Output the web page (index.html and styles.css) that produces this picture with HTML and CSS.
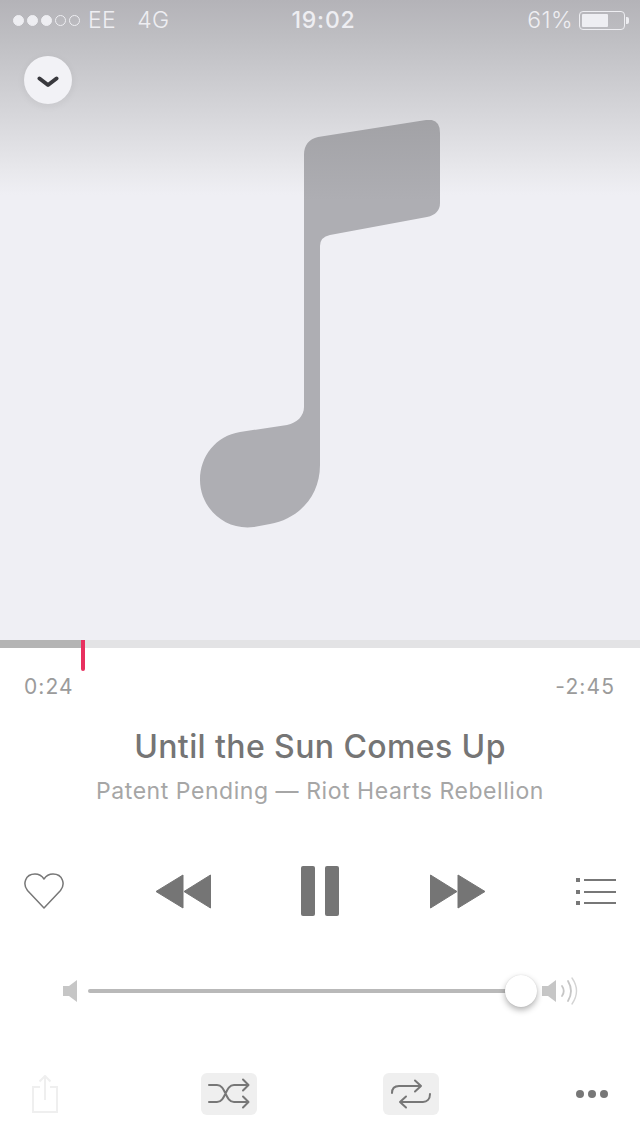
FILE: index.html
```html
<!DOCTYPE html>
<html lang="en">
<head>
    <meta charset="UTF-8">
    <meta name="viewport" content="width=device-width, initial-scale=1.0">
    <title>Now Playing</title>
    <link rel="stylesheet" href="styles.css">
</head>
<body>
    <div class="player">
        <div class="artwork">
            <div class="status-bar">
                <div class="status-left">
                    <div class="signal">
                        <span class="dot on"></span>
                        <span class="dot on"></span>
                        <span class="dot on"></span>
                        <span class="dot"></span>
                        <span class="dot"></span>
                    </div>
                    <span class="carrier">EE</span>
                    <span class="network">4G</span>
                </div>
                <div class="clock">19:02</div>
                <div class="status-right">
                    <span>61%</span>
                    <div class="battery"><div class="battery-level"></div></div>
                    <div class="battery-nub"></div>
                </div>
            </div>

            <button class="close-btn" aria-label="Close">
                <svg width="22" height="12" viewBox="0 0 22 12">
                    <path d="M2.5 2.5 L11 9 L19.5 2.5" fill="none" stroke="#38383d" stroke-width="4" stroke-linecap="round" stroke-linejoin="round"/>
                </svg>
            </button>

            <svg class="note" width="240" height="408" viewBox="200 120 240 408">
                <defs>
                    <linearGradient id="noteFill" gradientUnits="userSpaceOnUse" x1="0" y1="120" x2="0" y2="200">
                        <stop offset="0" stop-color="#a2a2a6"/>
                        <stop offset="1" stop-color="#aeaeb3"/>
                    </linearGradient>
                </defs>
                <path fill="url(#noteFill)" d="M318 137 L426 120 Q440 118 440 133 L440 203 Q440 214 427 217 L330 235 Q320 237 320 246 L320 465 C320 497 298 519 270 524 L254 527 C225 531 200 508 200 480 C200 456 216 436 240 432 L287 425 C297 423 304 416 304 407 L304 155 C304 145 309 139 318 137 Z"/>
            </svg>
        </div>

        <div class="progress">
            <div class="progress-fill"></div>
            <div class="playhead"></div>
        </div>

        <div class="times">
            <span>0:24</span>
            <span>-2:45</span>
        </div>

        <div class="track-title">Until the Sun Comes Up</div>
        <div class="track-sub">Patent Pending — Riot Hearts Rebellion</div>

        <div class="controls">
            <svg width="40" height="36" viewBox="0 0 40 36">
                <path d="M20 35 L3.5 17.5 C-1.5 11.5 1 1 11 1 C15 1 18 3 20 6 C22 3 25 1 29 1 C39 1 41.5 11.5 36.5 17.5 Z" fill="none" stroke="#777" stroke-width="1.5" stroke-linejoin="round"/>
            </svg>
            <svg width="56" height="35" viewBox="0 0 56 35">
                <path d="M1 17.5 L28 1 L28 34 Z M29 17.5 L55.5 1 L55.5 34 Z" fill="#757575" stroke="#757575" stroke-width="1" stroke-linejoin="round"/>
            </svg>
            <div class="pause">
                <span></span>
                <span></span>
            </div>
            <svg width="56" height="35" viewBox="0 0 56 35">
                <path d="M0.5 1 L27 17.5 L0.5 34 Z M28 1 L55 17.5 L28 34 Z" fill="#757575" stroke="#757575" stroke-width="1" stroke-linejoin="round"/>
            </svg>
            <svg width="40" height="27" viewBox="0 0 40 27">
                <path d="M0 0 h4 v4 h-4 Z M0 12 h4 v4 h-4 Z M0 23 h4 v4 h-4 Z" fill="#777"/>
                <path d="M8 2 H40 M8 14 H40 M8 25 H40" stroke="#777" stroke-width="2"/>
            </svg>
        </div>

        <div class="volume">
            <svg width="14" height="22" viewBox="0 0 14 22">
                <path d="M0 6 H6 L14 0 V22 L6 16 H0 Z" fill="#c6c6c6"/>
            </svg>
            <div class="volume-track">
                <div class="volume-knob"></div>
            </div>
            <svg width="36" height="28" viewBox="0 0 36 28">
                <path d="M0 9 H6 L14 3 V25 L6 19 H0 Z" fill="#c6c6c6"/>
                <path d="M20 9 Q23.5 14 20 19 M26 4 Q32 14 26 24" fill="none" stroke="#c6c6c6" stroke-width="1.8" stroke-linecap="round"/>
                <path d="M30 1 Q39 14 30 27" fill="none" stroke="#d4d4d4" stroke-width="1.4" stroke-linecap="round"/>
            </svg>
        </div>

        <div class="actions">
            <svg class="share" width="26" height="38" viewBox="0 0 26 38">
                <path d="M8 12 H1 V37 H25 V12 H18 M13 25 V1 M7.5 6.5 L13 1 L18.5 6.5" fill="none" stroke="#efefef" stroke-width="2"/>
            </svg>
            <div class="toggle shuffle">
                <svg width="56" height="42" viewBox="0 0 56 42">
                    <path d="M8 12 H16 C25 12 24 29 33 29 H47 M8 29 H16 C25 29 24 12 33 12 H47 M42 6.5 L47.5 12 L42 17.5 M42 23.5 L47.5 29 L42 34.5" fill="none" stroke="#777" stroke-width="2" stroke-linecap="round" stroke-linejoin="round"/>
                </svg>
            </div>
            <div class="toggle repeat">
                <svg width="56" height="42" viewBox="0 0 56 42">
                    <path d="M9 20 C9 15 12 13 16 13 H38 M32 7.5 L38 13 L32 18.5 M47 21 C47 26 44 29 40 29 H17 M23 23.5 L17 29 L23 34.5" fill="none" stroke="#777" stroke-width="2" stroke-linecap="round" stroke-linejoin="round"/>
                </svg>
            </div>
            <div class="more">
                <span></span>
                <span></span>
                <span></span>
            </div>
        </div>
    </div>
</body>
</html>
```

FILE: styles.css
```css
* {
    box-sizing: border-box;
}

body {
    margin: 0;
    background: #fff;
    font-family: Inter, "Liberation Sans", sans-serif;
    overflow: hidden;
}

.player {
    width: 640px;
    height: 1136px;
}

.artwork {
    position: relative;
    height: 640px;
    padding-top: 8px;
    display: flex;
    align-items: center;
    justify-content: center;
    background: linear-gradient(to bottom, #b4b3b8 0, #bfbfc3 40px, #d8d8dc 120px, #e8e8ec 170px, #efeff4 195px);
}

.status-bar {
    position: absolute;
    top: 0;
    left: 0;
    right: 0;
    height: 40px;
    padding: 0 11px 0 13px;
    display: grid;
    grid-template-columns: 1fr auto 1fr;
    align-items: center;
    color: #eeeef2;
    font-size: 23px;
    font-weight: 300;
    letter-spacing: 0.4px;
}

.status-left {
    display: flex;
    align-items: center;
}

.signal {
    display: flex;
    gap: 3px;
}

.dot {
    width: 11px;
    height: 11px;
    border-radius: 50%;
    border: 1px solid #eeeef2;
}

.dot.on {
    background: #eeeef2;
}

.carrier {
    margin-left: 8px;
}

.network {
    margin-left: 21px;
}

.clock {
    margin-left: 5px;
    font-weight: 500;
    letter-spacing: 0.8px;
}

.status-right {
    display: flex;
    align-items: center;
    justify-content: flex-end;
}

.battery {
    width: 46px;
    height: 19px;
    margin-left: 6px;
    padding: 2px;
    border: 1px solid #eeeef2;
    border-radius: 4px;
}

.battery-level {
    width: 26px;
    height: 100%;
    background: #eeeef2;
    border-radius: 1px;
}

.battery-nub {
    width: 3px;
    height: 7px;
    margin-left: 1px;
    background: #eeeef2;
    border-radius: 0 2px 2px 0;
}

.close-btn {
    position: absolute;
    top: 56px;
    left: 24px;
    width: 48px;
    height: 48px;
    padding: 4px 0 0;
    border: none;
    border-radius: 50%;
    background: #f2f2f6;
    box-shadow: 0 2px 8px rgba(0,0,0,0.06);
    display: flex;
    align-items: center;
    justify-content: center;
}

.progress {
    position: relative;
    height: 8px;
    background: #e3e3e5;
}

.progress-fill {
    width: 81px;
    height: 100%;
    background: #b4b4b4;
}

.playhead {
    position: absolute;
    top: 0;
    left: 81px;
    width: 4px;
    height: 31px;
    background: #e8305f;
    border-radius: 0 0 2px 2px;
}

.times {
    display: flex;
    justify-content: space-between;
    margin-top: 24px;
    padding: 0 25px 0 24px;
    font-size: 21px;
    line-height: 30px;
    letter-spacing: 1.1px;
    color: #9b9b9b;
}

.track-title {
    margin-top: 25px;
    text-align: center;
    font-size: 32px;
    font-weight: 500;
    line-height: 40px;
    letter-spacing: 0.4px;
    color: #757575;
}

.track-sub {
    margin-top: 8px;
    text-align: center;
    font-size: 23px;
    line-height: 32px;
    letter-spacing: 0.55px;
    color: #a6a6a6;
}

.controls {
    display: flex;
    align-items: center;
    justify-content: space-between;
    height: 50px;
    margin-top: 59px;
    padding: 0 24px;
}

.pause {
    display: flex;
    gap: 10px;
}

.pause span {
    width: 14px;
    height: 50px;
    background: #757575;
    border-radius: 2px;
}

.volume {
    display: flex;
    align-items: center;
    height: 32px;
    margin-top: 59px;
    padding-left: 63px;
}

.volume-track {
    position: relative;
    width: 433px;
    height: 4px;
    margin-left: 11px;
    background: #b9b9b9;
    border-radius: 2px;
}

.volume-knob {
    position: absolute;
    top: -14px;
    right: -16px;
    width: 32px;
    height: 32px;
    border-radius: 50%;
    background: #fff;
    box-shadow: 0 3px 6px rgba(0,0,0,0.3), 0 0 1px rgba(0,0,0,0.15);
}

.volume-track + svg {
    margin-left: 21px;
}

.actions {
    display: flex;
    align-items: center;
    height: 42px;
    margin-top: 66px;
}

.share {
    margin-left: 32px;
}

.toggle {
    width: 56px;
    height: 42px;
    background: #efefef;
    border-radius: 6px;
}

.toggle svg {
    display: block;
}

.shuffle {
    margin-left: 143px;
}

.repeat {
    margin-left: 126px;
}

.more {
    display: flex;
    gap: 4px;
    margin-left: 137px;
}

.more span {
    width: 8px;
    height: 8px;
    border-radius: 50%;
    background: #777;
}
```
